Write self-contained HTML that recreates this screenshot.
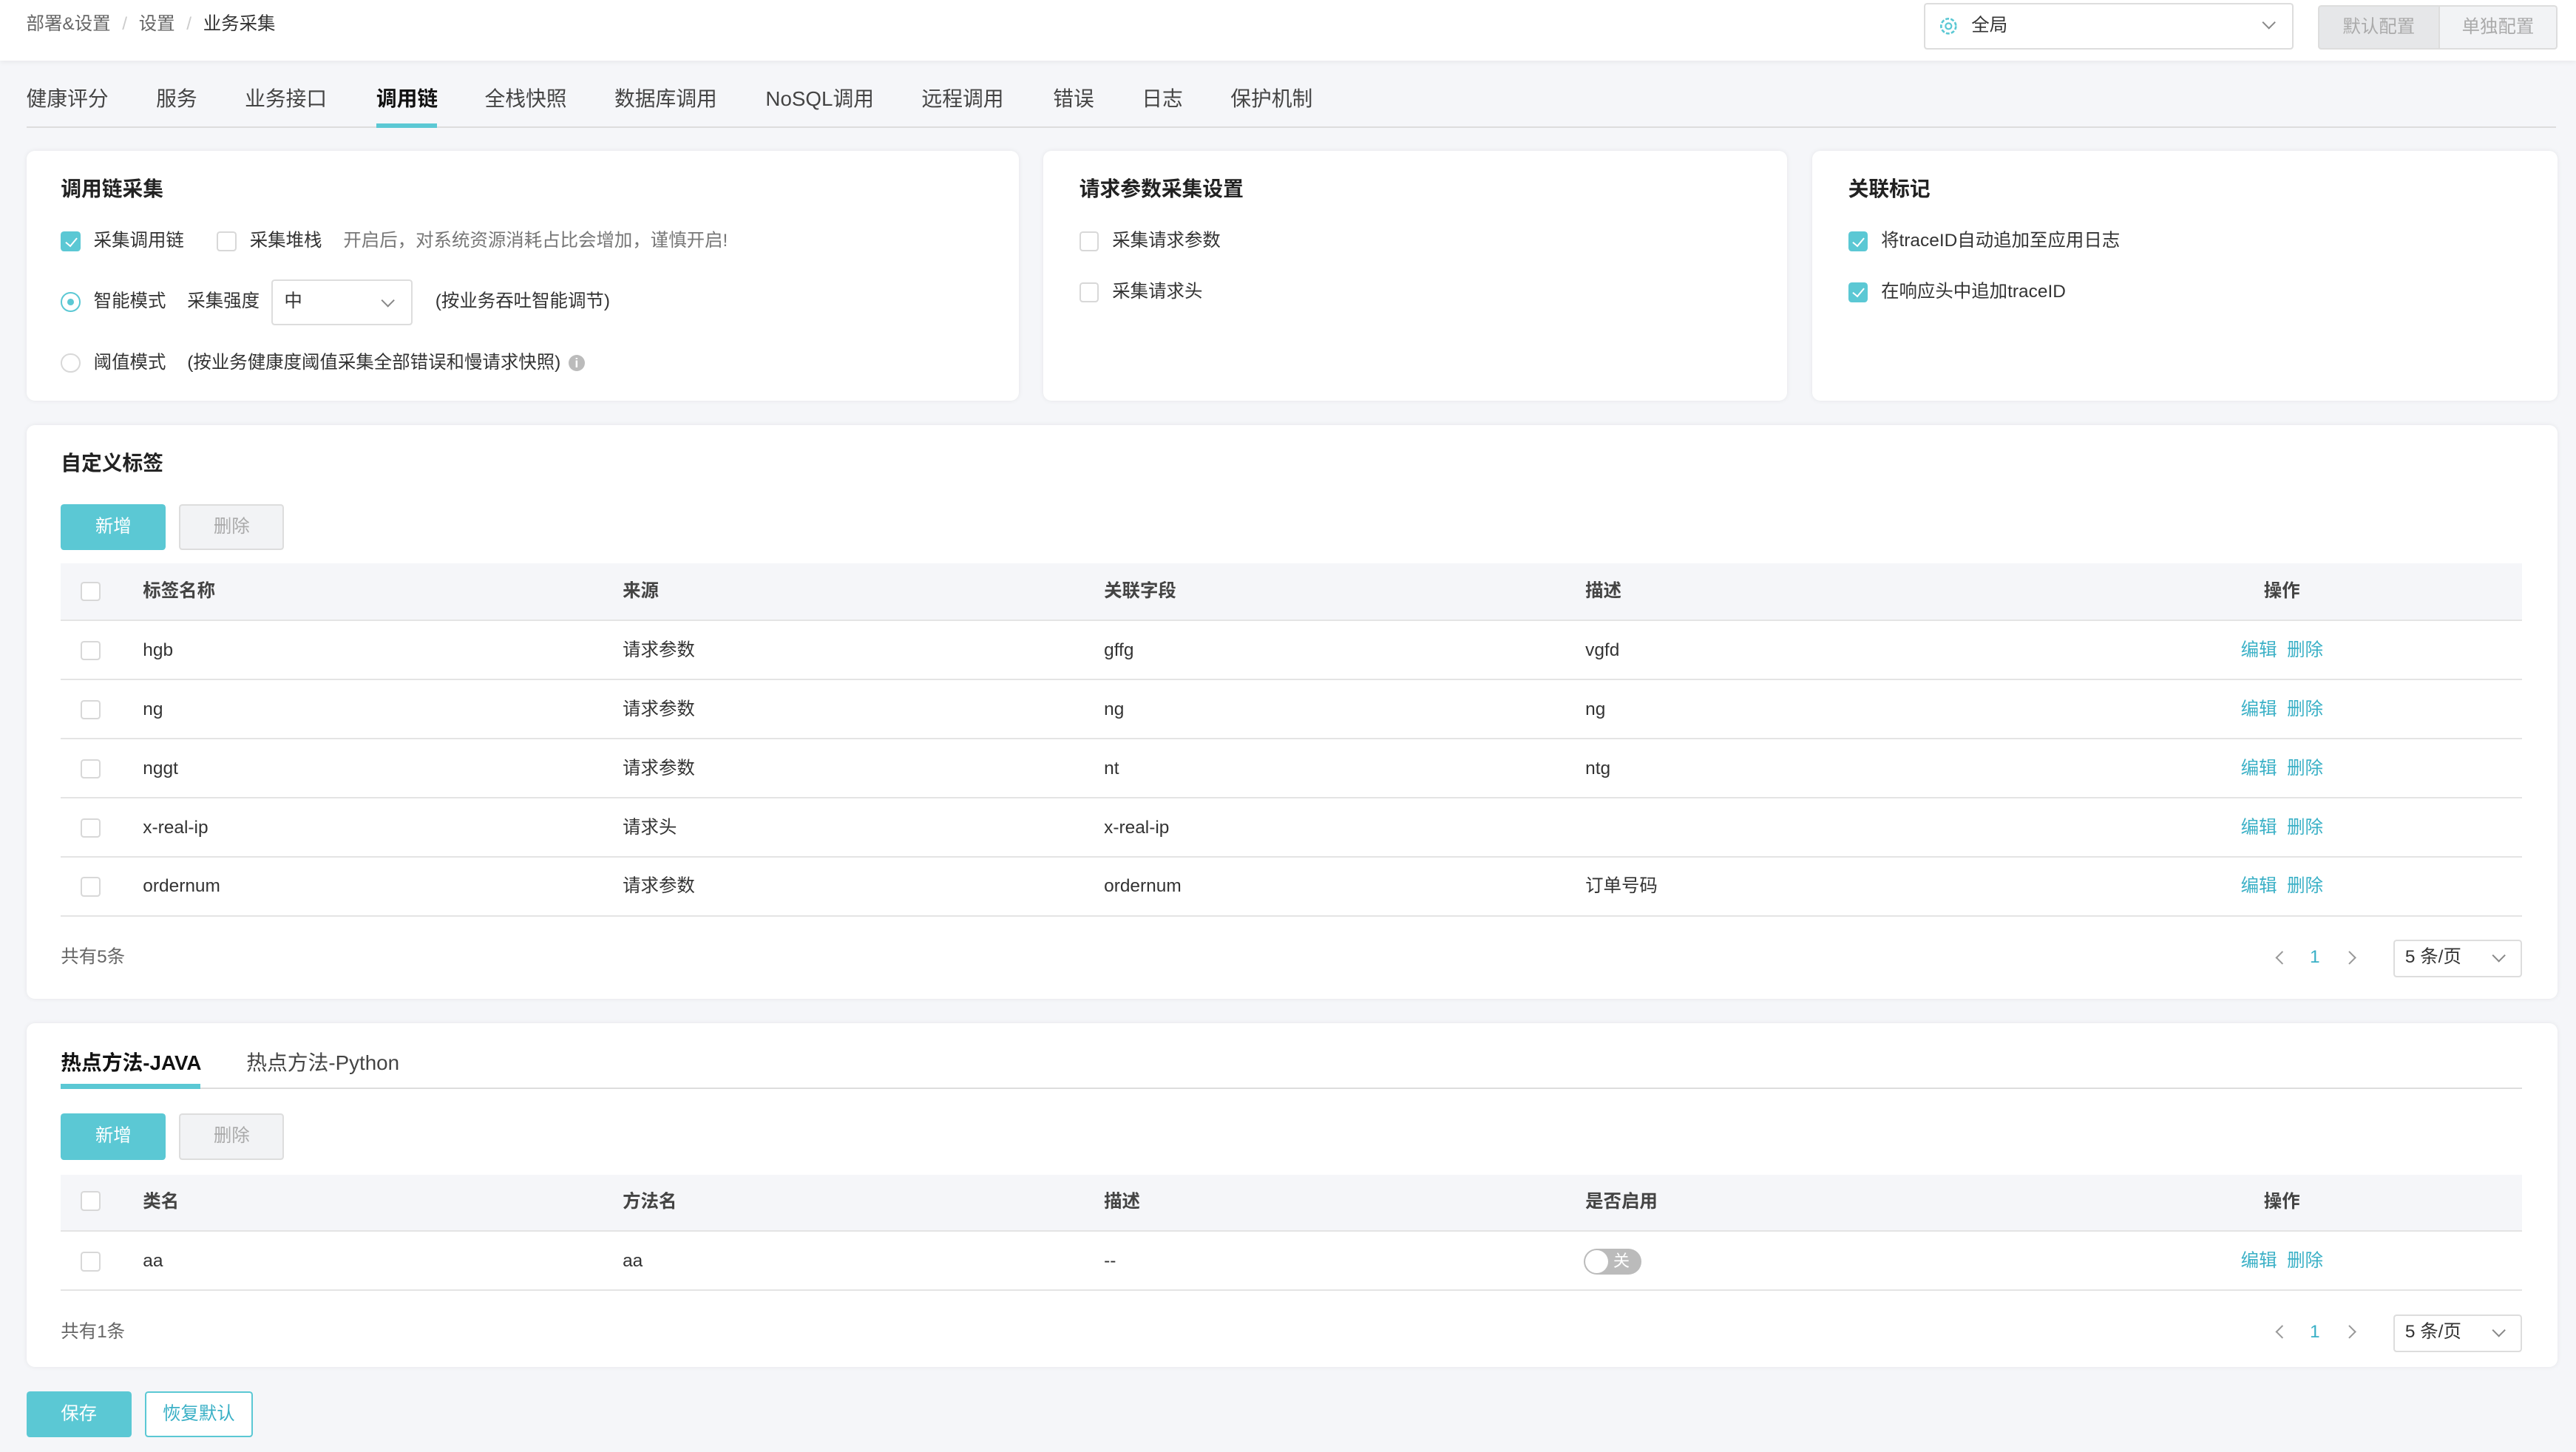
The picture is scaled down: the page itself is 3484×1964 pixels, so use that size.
<!DOCTYPE html>
<html><head><meta charset="utf-8"><style>
*{box-sizing:border-box;margin:0;padding:0}
html,body{width:3484px;height:1964px;overflow:hidden;background:#f5f6f9}
#r{zoom:2.2219;width:1568px;height:884px;position:relative;font-family:"Liberation Sans","Noto Sans CJK SC",sans-serif;font-size:11px;color:#333}
.a{position:absolute;white-space:nowrap;line-height:12px}
.hdr{position:absolute;left:0;top:0;width:1568px;height:37px;background:#fff;box-shadow:0 1px 3px rgba(0,0,0,.06)}
.card{position:absolute;background:#fff;border-radius:5px;box-shadow:0 0 3px rgba(0,0,0,.07)}
.t{font-size:12.5px;font-weight:bold;color:#222;line-height:14px}
.tab{font-size:12.5px;color:#444;line-height:14px}
.cb{position:absolute;width:12px;height:12px;border:1px solid #d8d8d8;border-radius:2px;background:#fff}
.cb.on{background:#5bc8d4;border-color:#5bc8d4}
.cb.on:after{content:"";position:absolute;left:3.5px;top:1px;width:3px;height:6px;border:solid #fff;border-width:0 1px 1px 0;transform:rotate(40deg)}
.btn{position:absolute;height:28px;border-radius:2px;text-align:center;line-height:28px;font-size:11px}
.add{background:#5bc8d4;color:#fff}
.del{background:#f2f3f5;border:1px solid #ddd;color:#aaa;line-height:26px}
.th{position:absolute;background:#f5f6f9;height:35px;border-bottom:1px solid #e4e4e4}
.row{position:absolute;height:36px;border-bottom:1px solid #e4e4e4}
.lk{color:#3ab0c6}
.sel{position:absolute;border:1px solid #ddd;border-radius:2px;background:#fff}
.chev{position:absolute;width:6px;height:6px;border:solid #888;border-width:0 1px 1px 0;transform:rotate(45deg)}
.pl{position:absolute;width:6px;height:6px;border:solid #999;border-width:0 0 1px 1px;transform:rotate(45deg)}
.pr{position:absolute;width:6px;height:6px;border:solid #999;border-width:1px 1px 0 0;transform:rotate(45deg)}
</style></head><body><div id="r">
<div class="hdr"></div>
<div class="a" style="left:16px;top:9px;color:#666">部署&amp;设置 <span style="color:#ccc;margin:0 4px">/</span> 设置 <span style="color:#ccc;margin:0 4px">/</span> <span style="color:#333">业务采集</span></div>
<div class="sel" style="left:1171px;top:2px;width:225px;height:28px"></div>
<svg class="a" style="left:1180px;top:10px" width="12" height="12" viewBox="0 0 12 12"><circle cx="6" cy="6" r="4.5" fill="none" stroke="#5bc8d4" stroke-width="1.2" stroke-dasharray="2.2 1"/><circle cx="6" cy="6" r="1.8" fill="none" stroke="#5bc8d4"/></svg>
<div class="a" style="left:1200px;top:10px;color:#333">全局</div>
<div class="chev" style="left:1378px;top:11px"></div>
<div class="a" style="left:1411px;top:3px;width:74px;height:27px;background:#e6e7e9;border:1px solid #ddd;border-radius:2px 0 0 2px;text-align:center;line-height:25px;color:#aaa">默认配置</div>
<div class="a" style="left:1485px;top:3px;width:72px;height:27px;background:#f2f3f5;border:1px solid #ddd;border-left:none;border-radius:0 2px 2px 0;text-align:center;line-height:25px;color:#aaa">单独配置</div>

<div class="a tab" style="left:16px;top:53px">健康评分</div>
<div class="a tab" style="left:95px;top:53px">服务</div>
<div class="a tab" style="left:149px;top:53px">业务接口</div>
<div class="a tab" style="left:229px;top:53px;color:#111;font-weight:bold">调用链</div>
<div class="a tab" style="left:295px;top:53px">全栈快照</div>
<div class="a tab" style="left:374px;top:53px">数据库调用</div>
<div class="a tab" style="left:466px;top:53px">NoSQL调用</div>
<div class="a tab" style="left:561px;top:53px">远程调用</div>
<div class="a tab" style="left:641px;top:53px">错误</div>
<div class="a tab" style="left:695px;top:53px">日志</div>
<div class="a tab" style="left:749px;top:53px">保护机制</div>
<div class="a" style="left:16px;top:77px;width:1540px;height:1px;background:#ddd"></div>
<div class="a" style="left:229px;top:75px;width:37px;height:3px;background:#5bc8d4"></div>

<div class="card" style="left:16px;top:92px;width:604px;height:152px"></div>
<div class="a t" style="left:37px;top:108px">调用链采集</div>
<div class="cb on" style="left:37px;top:141px"></div><div class="a" style="left:57px;top:141px">采集调用链</div>
<div class="cb" style="left:132px;top:141px"></div><div class="a" style="left:152px;top:141px">采集堆栈</div>
<div class="a" style="left:209px;top:141px;color:#777">开启后，对系统资源消耗占比会增加，谨慎开启!</div>
<div class="a" style="left:37px;top:178px;width:12px;height:12px;border:1px solid #5bc8d4;border-radius:50%"><div style="position:absolute;left:3px;top:3px;width:4px;height:4px;border-radius:50%;background:#5bc8d4"></div></div>
<div class="a" style="left:57px;top:178px">智能模式</div><div class="a" style="left:114px;top:178px">采集强度</div>
<div class="sel" style="left:165px;top:170px;width:86px;height:28px"></div><div class="a" style="left:173px;top:178px">中</div><div class="chev" style="left:233px;top:180px"></div>
<div class="a" style="left:265px;top:178px">(按业务吞吐智能调节)</div>
<div class="a" style="left:37px;top:215px;width:12px;height:12px;border:1px solid #d8d8d8;border-radius:50%"></div>
<div class="a" style="left:57px;top:215px">阈值模式</div><div class="a" style="left:114px;top:215px">(按业务健康度阈值采集全部错误和慢请求快照)</div>
<div class="a" style="left:346px;top:216px;width:10px;height:10px;border-radius:50%;background:#bbb;color:#fff;font-size:8px;text-align:center;line-height:10px;font-weight:bold">i</div>

<div class="card" style="left:635px;top:92px;width:453px;height:152px"></div>
<div class="a t" style="left:657px;top:108px">请求参数采集设置</div>
<div class="cb" style="left:657px;top:141px"></div><div class="a" style="left:677px;top:141px">采集请求参数</div>
<div class="cb" style="left:657px;top:172px"></div><div class="a" style="left:677px;top:172px">采集请求头</div>

<div class="card" style="left:1103px;top:92px;width:454px;height:152px"></div>
<div class="a t" style="left:1125px;top:108px">关联标记</div>
<div class="cb on" style="left:1125px;top:141px"></div><div class="a" style="left:1145px;top:141px">将traceID自动追加至应用日志</div>
<div class="cb on" style="left:1125px;top:172px"></div><div class="a" style="left:1145px;top:172px">在响应头中追加traceID</div>

<div class="card" style="left:16px;top:259px;width:1541px;height:349px"></div>
<div class="a t" style="left:37px;top:275px">自定义标签</div>
<div class="btn add" style="left:37px;top:307px;width:64px">新增</div>
<div class="btn del" style="left:109px;top:307px;width:64px">删除</div>
<div class="th" style="left:37px;top:343px;width:1498px"></div>
<div class="cb" style="left:49px;top:354px"></div>
<div class="a" style="left:87px;top:354px;font-weight:bold;color:#444">标签名称</div><div class="a" style="left:379px;top:354px;font-weight:bold;color:#444">来源</div><div class="a" style="left:672px;top:354px;font-weight:bold;color:#444">关联字段</div><div class="a" style="left:965px;top:354px;font-weight:bold;color:#444">描述</div><div class="a" style="left:1378px;top:354px;font-weight:bold;color:#444">操作</div>

<div class="row" style="left:37px;top:378px;width:1498px"></div><div class="cb" style="left:49px;top:390px"></div>
<div class="a" style="left:87px;top:390px">hgb</div><div class="a" style="left:379px;top:390px">请求参数</div><div class="a" style="left:672px;top:390px">gffg</div><div class="a" style="left:965px;top:390px">vgfd</div><div class="a lk" style="left:1364px;top:390px">编辑&nbsp;&nbsp;删除</div>
<div class="row" style="left:37px;top:414px;width:1498px"></div><div class="cb" style="left:49px;top:426px"></div>
<div class="a" style="left:87px;top:426px">ng</div><div class="a" style="left:379px;top:426px">请求参数</div><div class="a" style="left:672px;top:426px">ng</div><div class="a" style="left:965px;top:426px">ng</div><div class="a lk" style="left:1364px;top:426px">编辑&nbsp;&nbsp;删除</div>
<div class="row" style="left:37px;top:450px;width:1498px"></div><div class="cb" style="left:49px;top:462px"></div>
<div class="a" style="left:87px;top:462px">nggt</div><div class="a" style="left:379px;top:462px">请求参数</div><div class="a" style="left:672px;top:462px">nt</div><div class="a" style="left:965px;top:462px">ntg</div><div class="a lk" style="left:1364px;top:462px">编辑&nbsp;&nbsp;删除</div>
<div class="row" style="left:37px;top:486px;width:1498px"></div><div class="cb" style="left:49px;top:498px"></div>
<div class="a" style="left:87px;top:498px">x-real-ip</div><div class="a" style="left:379px;top:498px">请求头</div><div class="a" style="left:672px;top:498px">x-real-ip</div><div class="a lk" style="left:1364px;top:498px">编辑&nbsp;&nbsp;删除</div>
<div class="row" style="left:37px;top:522px;width:1498px"></div><div class="cb" style="left:49px;top:534px"></div>
<div class="a" style="left:87px;top:534px">ordernum</div><div class="a" style="left:379px;top:534px">请求参数</div><div class="a" style="left:672px;top:534px">ordernum</div><div class="a" style="left:965px;top:534px">订单号码</div><div class="a lk" style="left:1364px;top:534px">编辑&nbsp;&nbsp;删除</div>
<div class="a" style="left:37px;top:577px;color:#666">共有5条</div>
<div class="pl" style="left:1386px;top:580px"></div><div class="a lk" style="left:1406px;top:577px">1</div><div class="pr" style="left:1427px;top:580px"></div>
<div class="sel" style="left:1457px;top:572px;width:78px;height:23px"></div><div class="a" style="left:1464px;top:577px">5 条/页</div><div class="chev" style="left:1518px;top:579px"></div>

<div class="card" style="left:16px;top:623px;width:1541px;height:209px"></div>
<div class="a t" style="left:37px;top:640px;color:#111">热点方法-JAVA</div>
<div class="a tab" style="left:150px;top:640px">热点方法-Python</div>
<div class="a" style="left:37px;top:662px;width:1498px;height:1px;background:#ddd"></div>
<div class="a" style="left:37px;top:660px;width:85px;height:3px;background:#5bc8d4"></div>
<div class="btn add" style="left:37px;top:678px;width:64px">新增</div>
<div class="btn del" style="left:109px;top:678px;width:64px">删除</div>
<div class="th" style="left:37px;top:715px;width:1498px"></div>
<div class="cb" style="left:49px;top:725px"></div>
<div class="a" style="left:87px;top:726px;font-weight:bold;color:#444">类名</div><div class="a" style="left:379px;top:726px;font-weight:bold;color:#444">方法名</div><div class="a" style="left:672px;top:726px;font-weight:bold;color:#444">描述</div><div class="a" style="left:965px;top:726px;font-weight:bold;color:#444">是否启用</div><div class="a" style="left:1378px;top:726px;font-weight:bold;color:#444">操作</div>
<div class="row" style="left:37px;top:750px;width:1498px"></div><div class="cb" style="left:49px;top:762px"></div>
<div class="a" style="left:87px;top:762px">aa</div><div class="a" style="left:379px;top:762px">aa</div><div class="a" style="left:672px;top:762px">--</div>
<div class="a" style="left:964px;top:760px;width:35px;height:16px;border-radius:8px;background:#bbb"><div style="position:absolute;left:1px;top:1px;width:14px;height:14px;border-radius:50%;background:#fff"></div><span style="position:absolute;left:18px;top:2px;color:#fff;font-size:10px;line-height:12px">关</span></div>
<div class="a lk" style="left:1364px;top:762px">编辑&nbsp;&nbsp;删除</div>
<div class="a" style="left:37px;top:805px;color:#666">共有1条</div>
<div class="pl" style="left:1386px;top:808px"></div><div class="a lk" style="left:1406px;top:805px">1</div><div class="pr" style="left:1427px;top:808px"></div>
<div class="sel" style="left:1457px;top:800px;width:78px;height:23px"></div><div class="a" style="left:1464px;top:805px">5 条/页</div><div class="chev" style="left:1518px;top:807px"></div>

<div class="btn add" style="left:16px;top:847px;width:64px">保存</div>
<div class="btn" style="left:88px;top:847px;width:66px;border:1px solid #5bc8d4;color:#3ab0c6;background:#fff;line-height:26px">恢复默认</div>
</div></body></html>
